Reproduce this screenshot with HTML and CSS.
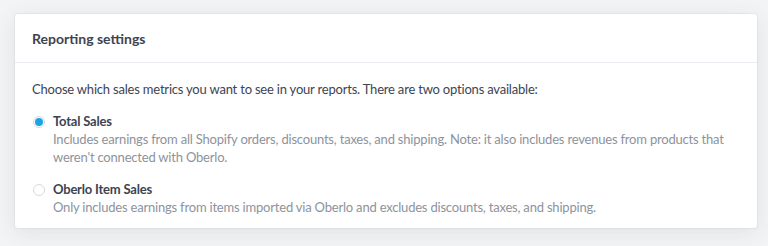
FILE: index.html
```html
<!DOCTYPE html>
<html lang="en">
<head>
    <meta charset="UTF-8">
    <title>Reporting settings</title>
    <link rel="stylesheet" href="styles.css">
</head>
<body>
    <div class="card">
        <div class="card-header">
            <h3>Reporting settings</h3>
        </div>
        <div class="card-body">
            <p class="intro">Choose which sales metrics you want to see in your reports. There are two options available:</p>

            <label class="option">
                <input type="radio" name="metric" value="total" checked>
                <span class="radio"></span>
                <span class="option-text">
                    <span class="option-title">Total Sales</span>
                    <span class="option-desc">Includes earnings from all Shopify orders, discounts, taxes, and shipping. Note: it also includes revenues from products that weren't connected with Oberlo.</span>
                </span>
            </label>

            <label class="option">
                <input type="radio" name="metric" value="oberlo">
                <span class="radio"></span>
                <span class="option-text">
                    <span class="option-title">Oberlo Item Sales</span>
                    <span class="option-desc">Only includes earnings from items imported via Oberlo and excludes discounts, taxes, and shipping.</span>
                </span>
            </label>
        </div>
    </div>
</body>
</html>
```

FILE: styles.css
```css
body {
    margin: 0;
    padding: 14px 11px 18px 15px;
    background: #f3f4f5;
    font-family: Lato, 'Noto Sans', sans-serif;
    font-size: 13px;
    letter-spacing: -0.2px;
    color: #3d4451;
}
.card {
    background: #fff;
    border-radius: 3px;
    box-shadow: 0 0 0 1px rgba(63, 63, 68, 0.05), 0 4px 22px rgba(63, 63, 68, 0.1);
}
.card-header {
    padding: 0 17px;
    height: 48px;
    display: flex;
    align-items: center;
    border-bottom: 1px solid #eaeef3;
}
.card-header h3 {
    margin: 0;
    font-size: 14px;
    font-weight: 700;
    letter-spacing: 0;
    color: #3d4451;
}
.card-body {
    padding: 17px 17px 12px;
}
.intro {
    margin: 0 0 14px;
    line-height: 18px;
}
.option {
    display: flex;
    align-items: flex-start;
    margin-bottom: 14px;
    cursor: pointer;
}
.option:last-child {
    margin-bottom: 0;
}
.option input {
    display: none;
}
.radio {
    flex: none;
    width: 12px;
    height: 12px;
    margin: 4px 8px 0 1px;
    border: 1px solid #d5dae0;
    border-radius: 50%;
    box-sizing: border-box;
    background: #fff;
    position: relative;
}
.option input:checked + .radio::after {
    content: "";
    position: absolute;
    top: 1px;
    left: 1px;
    width: 8px;
    height: 8px;
    border-radius: 50%;
    background: #1ba5e0;
}
.option-text {
    display: flex;
    flex-direction: column;
    line-height: 18px;
}
.option-title {
    font-weight: 700;
    color: #3d4451;
}
.option-desc {
    color: #8d939c;
}
```
